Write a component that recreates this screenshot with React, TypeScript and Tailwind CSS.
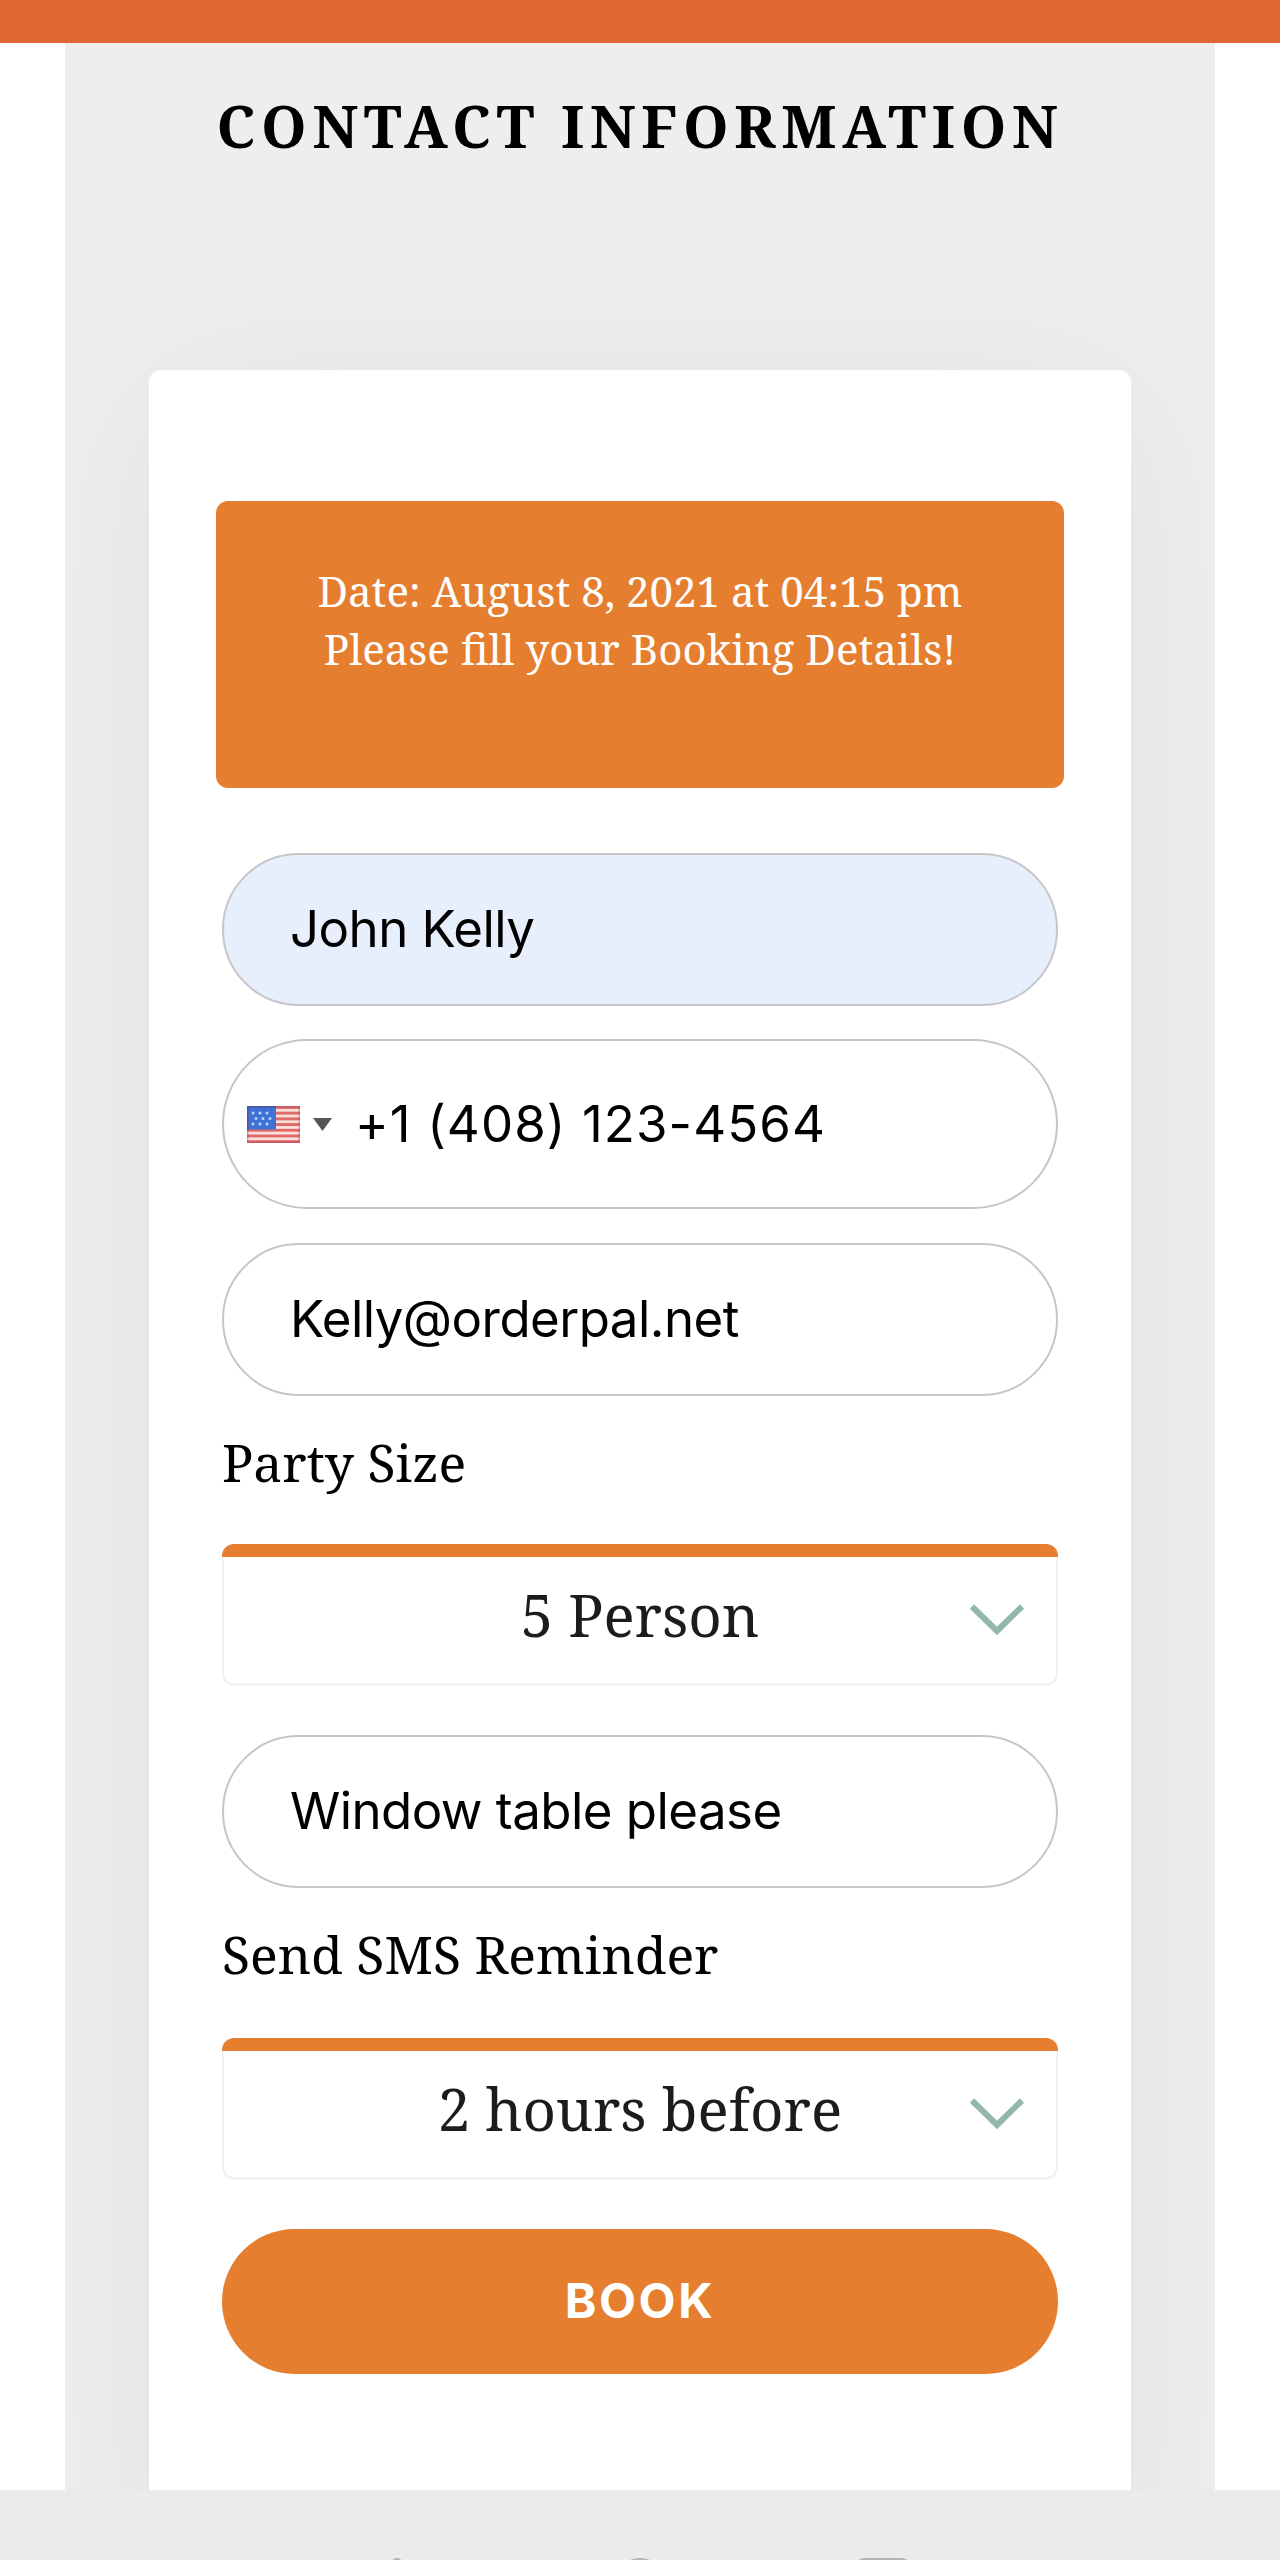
import type { ReactNode } from 'react';

function UsFlag() {
  const stripes = [0, 1, 2, 3, 4, 5, 6];
  const stars = [
    [6, 7], [13, 7], [20, 7],
    [9, 12.5], [16, 12.5], [23, 12.5],
    [6, 18], [13, 18], [20, 18],
  ];

  return (
    <svg width="53" height="37" viewBox="0 0 53 37" className="shrink-0">
      <rect width="53" height="37" fill="#fbe0dc" />
      {stripes.map((i) => (
        <rect key={i} y={i * 5.7} width="53" height="2.9" fill="#e0696a" />
      ))}
      <rect width="29" height="23.5" fill="#3f72d4" />
      {stars.map(([cx, cy]) => (
        <circle key={`${cx}-${cy}`} cx={cx} cy={cy} r="1.5" fill="#b9d3fa" />
      ))}
      <rect x="0.75" y="0.75" width="51.5" height="35.5" fill="none" stroke="#a94a5c" strokeOpacity="0.45" strokeWidth="1.5" />
      <path d="M0.75 24V0.75H29" fill="none" stroke="#4457a8" strokeWidth="1.5" />
    </svg>
  );
}

function Field({ children, filled = false }: { children: ReactNode; filled?: boolean }) {
  return (
    <div
      className={`flex h-[153px] items-center rounded-full border-2 border-[#c6c6c6] pl-[66px] font-[Inter,sans-serif] text-[51px] tracking-[-0.55px] text-black ${
        filled ? 'bg-[#e7effc]' : 'bg-white'
      }`}
    >
      {children}
    </div>
  );
}

function SelectBox({ value }: { value: string }) {
  return (
    <div className="relative h-[142px] overflow-hidden rounded-xl">
      <div className="h-[13px] bg-[#e67e2f]" />
      <div className="flex h-[129px] items-center justify-center rounded-b-xl border-x-2 border-b-[3px] border-[#f2f2f2] pb-[10px] text-[58.2px] leading-none text-[#1c1c1c]">
        {value}
      </div>
      <svg
        width="60"
        height="36"
        viewBox="0 0 60 36"
        fill="none"
        className="absolute top-[57px] right-[31px]"
      >
        <path d="M5 5.5L30 30L55 5.5" stroke="#93b7ab" strokeWidth="6" />
      </svg>
    </div>
  );
}

export default function App() {
  return (
    <div className="flex h-[2560px] w-[1280px] flex-col overflow-hidden bg-white font-['Noto_Serif',serif]">
      <header className="h-[43px] shrink-0 bg-[#e06731]" />

      <main className="mx-[65px] h-[2447px] shrink-0 overflow-hidden bg-[#eeeeee]">
        <h1 className="pt-[51px] text-center text-[58px] leading-[64px] font-bold tracking-[5.7px] whitespace-nowrap text-black">
          CONTACT INFORMATION
        </h1>

        <div className="mx-[84px] mt-[212px] h-[2200px] rounded-xl bg-white px-[67px] pt-[131px] shadow-[0_20px_170px_rgba(0,0,0,0.06)]">
          <div className="h-[287px] rounded-xl bg-[#e67e2f] pt-[61px] text-center text-[42px] leading-[58px] text-white">
            <p>Date: August 8, 2021 at 04:15 pm</p>
            <p>Please fill your Booking Details!</p>
          </div>

          {/* Booking form */}
          <div className="mx-[6px] mt-[65px]">
            <Field filled>John Kelly</Field>

            <div className="mt-[33px] flex h-[170px] items-center rounded-full border-2 border-[#c6c6c6] bg-white pl-[23px] font-[Inter,sans-serif] text-[51px] text-black">
              <UsFlag />
              <svg width="19" height="13" viewBox="0 0 19 13" className="ml-[13px]">
                <path d="M0 0H19L9.5 13Z" fill="#555555" />
              </svg>
              <span className="ml-[23px] tracking-[1.1px]">+1 (408) 123-4564</span>
            </div>

            <div className="mt-[34px]">
              <Field>Kelly@orderpal.net</Field>
            </div>

            <div className="h-[148px] text-[51.7px] leading-[132px] text-black">Party Size</div>
            <SelectBox value="5 Person" />

            <div className="mt-[49px]">
              <Field>Window table please</Field>
            </div>

            <div className="h-[150px] text-[51.7px] leading-[132px] text-black">Send SMS Reminder</div>
            <SelectBox value="2 hours before" />

            <button
              type="button"
              className="mt-[49px] flex h-[145px] w-full items-center justify-center rounded-full bg-[#e67e2f] pb-[2px] font-[Inter,sans-serif] text-[48px] font-bold tracking-[2.6px] text-white"
            >
              BOOK
            </button>
          </div>
        </div>
      </main>

      {/* Bottom navigation, mostly below the fold */}
      <footer className="flex h-[70px] shrink-0 justify-between bg-[#ebebeb] px-[370px] pt-[68px]">
        <svg width="54" height="54" viewBox="0 0 54 54" className="shrink-0">
          <path d="M27 -2L52 22V52H2V22Z" fill="#b5b5b5" />
        </svg>
        <svg width="54" height="54" viewBox="0 0 54 54" className="shrink-0">
          <circle cx="27" cy="27" r="27" fill="#b5b5b5" />
        </svg>
        <svg width="54" height="54" viewBox="0 0 54 54" className="shrink-0">
          <rect width="54" height="54" rx="8" fill="#b5b5b5" />
        </svg>
      </footer>
    </div>
  );
}
